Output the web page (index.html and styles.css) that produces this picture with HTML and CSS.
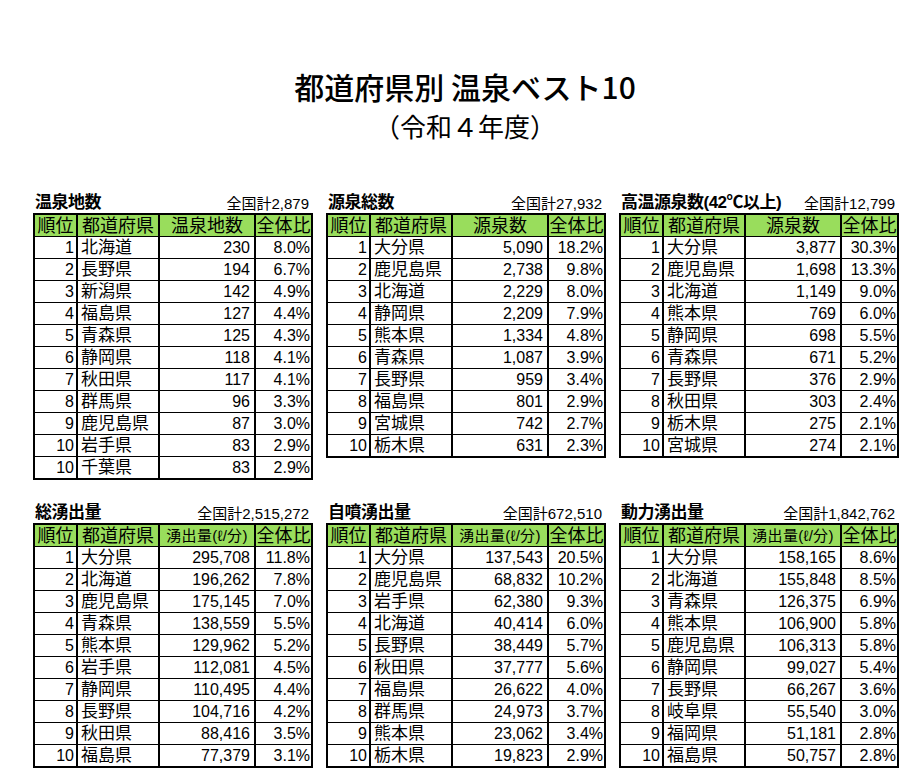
FILE: index.html
```html
<!DOCTYPE html>
<html lang="ja">
<head>
<meta charset="utf-8">
<title>都道府県別 温泉ベスト10</title>
<link rel="stylesheet" href="styles.css">
</head>
<body>
<div class="page">
  <h1 class="title">都道府県別 温泉ベスト10</h1>
  <p class="subtitle">（令和４年度）</p>

  <div class="grid top">
    <section class="block">
      <div class="head"><span class="name">温泉地数</span><span class="total">全国計2,879</span></div>
      <table>
        <tr class="hdr"><th>順位</th><th>都道府県</th><th>温泉地数</th><th>全体比</th></tr>
        <tr><td class="r">1</td><td class="p">北海道</td><td class="v">230</td><td class="c">8.0%</td></tr>
        <tr><td class="r">2</td><td class="p">長野県</td><td class="v">194</td><td class="c">6.7%</td></tr>
        <tr><td class="r">3</td><td class="p">新潟県</td><td class="v">142</td><td class="c">4.9%</td></tr>
        <tr><td class="r">4</td><td class="p">福島県</td><td class="v">127</td><td class="c">4.4%</td></tr>
        <tr><td class="r">5</td><td class="p">青森県</td><td class="v">125</td><td class="c">4.3%</td></tr>
        <tr><td class="r">6</td><td class="p">静岡県</td><td class="v">118</td><td class="c">4.1%</td></tr>
        <tr><td class="r">7</td><td class="p">秋田県</td><td class="v">117</td><td class="c">4.1%</td></tr>
        <tr><td class="r">8</td><td class="p">群馬県</td><td class="v">96</td><td class="c">3.3%</td></tr>
        <tr><td class="r">9</td><td class="p">鹿児島県</td><td class="v">87</td><td class="c">3.0%</td></tr>
        <tr><td class="r">10</td><td class="p">岩手県</td><td class="v">83</td><td class="c">2.9%</td></tr>
        <tr><td class="r">10</td><td class="p">千葉県</td><td class="v">83</td><td class="c">2.9%</td></tr>
      </table>
    </section>

    <section class="block">
      <div class="head"><span class="name">源泉総数</span><span class="total">全国計27,932</span></div>
      <table>
        <tr class="hdr"><th>順位</th><th>都道府県</th><th>源泉数</th><th>全体比</th></tr>
        <tr><td class="r">1</td><td class="p">大分県</td><td class="v">5,090</td><td class="c">18.2%</td></tr>
        <tr><td class="r">2</td><td class="p">鹿児島県</td><td class="v">2,738</td><td class="c">9.8%</td></tr>
        <tr><td class="r">3</td><td class="p">北海道</td><td class="v">2,229</td><td class="c">8.0%</td></tr>
        <tr><td class="r">4</td><td class="p">静岡県</td><td class="v">2,209</td><td class="c">7.9%</td></tr>
        <tr><td class="r">5</td><td class="p">熊本県</td><td class="v">1,334</td><td class="c">4.8%</td></tr>
        <tr><td class="r">6</td><td class="p">青森県</td><td class="v">1,087</td><td class="c">3.9%</td></tr>
        <tr><td class="r">7</td><td class="p">長野県</td><td class="v">959</td><td class="c">3.4%</td></tr>
        <tr><td class="r">8</td><td class="p">福島県</td><td class="v">801</td><td class="c">2.9%</td></tr>
        <tr><td class="r">9</td><td class="p">宮城県</td><td class="v">742</td><td class="c">2.7%</td></tr>
        <tr><td class="r">10</td><td class="p">栃木県</td><td class="v">631</td><td class="c">2.3%</td></tr>
      </table>
    </section>

    <section class="block">
      <div class="head"><span class="name">高温源泉数(42℃以上)</span><span class="total">全国計12,799</span></div>
      <table>
        <tr class="hdr"><th>順位</th><th>都道府県</th><th>源泉数</th><th>全体比</th></tr>
        <tr><td class="r">1</td><td class="p">大分県</td><td class="v">3,877</td><td class="c">30.3%</td></tr>
        <tr><td class="r">2</td><td class="p">鹿児島県</td><td class="v">1,698</td><td class="c">13.3%</td></tr>
        <tr><td class="r">3</td><td class="p">北海道</td><td class="v">1,149</td><td class="c">9.0%</td></tr>
        <tr><td class="r">4</td><td class="p">熊本県</td><td class="v">769</td><td class="c">6.0%</td></tr>
        <tr><td class="r">5</td><td class="p">静岡県</td><td class="v">698</td><td class="c">5.5%</td></tr>
        <tr><td class="r">6</td><td class="p">青森県</td><td class="v">671</td><td class="c">5.2%</td></tr>
        <tr><td class="r">7</td><td class="p">長野県</td><td class="v">376</td><td class="c">2.9%</td></tr>
        <tr><td class="r">8</td><td class="p">秋田県</td><td class="v">303</td><td class="c">2.4%</td></tr>
        <tr><td class="r">9</td><td class="p">栃木県</td><td class="v">275</td><td class="c">2.1%</td></tr>
        <tr><td class="r">10</td><td class="p">宮城県</td><td class="v">274</td><td class="c">2.1%</td></tr>
      </table>
    </section>
  </div>

  <div class="grid bottom">
    <section class="block">
      <div class="head"><span class="name">総湧出量</span><span class="total">全国計2,515,272</span></div>
      <table>
        <tr class="hdr"><th>順位</th><th>都道府県</th><th class="small">湧出量(ℓ/分)</th><th>全体比</th></tr>
        <tr><td class="r">1</td><td class="p">大分県</td><td class="v">295,708</td><td class="c">11.8%</td></tr>
        <tr><td class="r">2</td><td class="p">北海道</td><td class="v">196,262</td><td class="c">7.8%</td></tr>
        <tr><td class="r">3</td><td class="p">鹿児島県</td><td class="v">175,145</td><td class="c">7.0%</td></tr>
        <tr><td class="r">4</td><td class="p">青森県</td><td class="v">138,559</td><td class="c">5.5%</td></tr>
        <tr><td class="r">5</td><td class="p">熊本県</td><td class="v">129,962</td><td class="c">5.2%</td></tr>
        <tr><td class="r">6</td><td class="p">岩手県</td><td class="v">112,081</td><td class="c">4.5%</td></tr>
        <tr><td class="r">7</td><td class="p">静岡県</td><td class="v">110,495</td><td class="c">4.4%</td></tr>
        <tr><td class="r">8</td><td class="p">長野県</td><td class="v">104,716</td><td class="c">4.2%</td></tr>
        <tr><td class="r">9</td><td class="p">秋田県</td><td class="v">88,416</td><td class="c">3.5%</td></tr>
        <tr><td class="r">10</td><td class="p">福島県</td><td class="v">77,379</td><td class="c">3.1%</td></tr>
      </table>
    </section>

    <section class="block">
      <div class="head"><span class="name">自噴湧出量</span><span class="total">全国計672,510</span></div>
      <table>
        <tr class="hdr"><th>順位</th><th>都道府県</th><th class="small">湧出量(ℓ/分)</th><th>全体比</th></tr>
        <tr><td class="r">1</td><td class="p">大分県</td><td class="v">137,543</td><td class="c">20.5%</td></tr>
        <tr><td class="r">2</td><td class="p">鹿児島県</td><td class="v">68,832</td><td class="c">10.2%</td></tr>
        <tr><td class="r">3</td><td class="p">岩手県</td><td class="v">62,380</td><td class="c">9.3%</td></tr>
        <tr><td class="r">4</td><td class="p">北海道</td><td class="v">40,414</td><td class="c">6.0%</td></tr>
        <tr><td class="r">5</td><td class="p">長野県</td><td class="v">38,449</td><td class="c">5.7%</td></tr>
        <tr><td class="r">6</td><td class="p">秋田県</td><td class="v">37,777</td><td class="c">5.6%</td></tr>
        <tr><td class="r">7</td><td class="p">福島県</td><td class="v">26,622</td><td class="c">4.0%</td></tr>
        <tr><td class="r">8</td><td class="p">群馬県</td><td class="v">24,973</td><td class="c">3.7%</td></tr>
        <tr><td class="r">9</td><td class="p">熊本県</td><td class="v">23,062</td><td class="c">3.4%</td></tr>
        <tr><td class="r">10</td><td class="p">栃木県</td><td class="v">19,823</td><td class="c">2.9%</td></tr>
      </table>
    </section>

    <section class="block">
      <div class="head"><span class="name">動力湧出量</span><span class="total">全国計1,842,762</span></div>
      <table>
        <tr class="hdr"><th>順位</th><th>都道府県</th><th class="small">湧出量(ℓ/分)</th><th>全体比</th></tr>
        <tr><td class="r">1</td><td class="p">大分県</td><td class="v">158,165</td><td class="c">8.6%</td></tr>
        <tr><td class="r">2</td><td class="p">北海道</td><td class="v">155,848</td><td class="c">8.5%</td></tr>
        <tr><td class="r">3</td><td class="p">青森県</td><td class="v">126,375</td><td class="c">6.9%</td></tr>
        <tr><td class="r">4</td><td class="p">熊本県</td><td class="v">106,900</td><td class="c">5.8%</td></tr>
        <tr><td class="r">5</td><td class="p">鹿児島県</td><td class="v">106,313</td><td class="c">5.8%</td></tr>
        <tr><td class="r">6</td><td class="p">静岡県</td><td class="v">99,027</td><td class="c">5.4%</td></tr>
        <tr><td class="r">7</td><td class="p">長野県</td><td class="v">66,267</td><td class="c">3.6%</td></tr>
        <tr><td class="r">8</td><td class="p">岐阜県</td><td class="v">55,540</td><td class="c">3.0%</td></tr>
        <tr><td class="r">9</td><td class="p">福岡県</td><td class="v">51,181</td><td class="c">2.8%</td></tr>
        <tr><td class="r">10</td><td class="p">福島県</td><td class="v">50,757</td><td class="c">2.8%</td></tr>
      </table>
    </section>
  </div>
</div>
</body>
</html>
```

FILE: styles.css
```css
html, body {
  margin: 0;
  padding: 0;
  background: #ffffff;
}

body {
  font-family: "Liberation Sans", "Noto Sans CJK JP", sans-serif;
  color: #000000;
}

.page {
  width: 864px;
  padding: 68px 0 0 33px;
}

.title {
  margin: 0;
  text-align: center;
  font-family: "Noto Sans CJK JP", sans-serif;
  font-weight: 500;
  font-size: 30px;
  line-height: 36px;
}

.subtitle {
  margin: 5px 0 0;
  text-align: center;
  font-family: "Noto Sans CJK JP", sans-serif;
  font-weight: 400;
  font-size: 26px;
  line-height: 34px;
}

.grid {
  display: flex;
  align-items: flex-start;
  gap: 15px;
}

.grid.top {
  margin-top: 50px;
}

.grid.bottom {
  margin-top: 23px;
}

.block {
  width: 278px;
}

.head {
  display: flex;
  justify-content: space-between;
  align-items: flex-end;
  height: 20px;
  padding: 0 2px;
}

.name {
  font-weight: 700;
  font-size: 17px;
  line-height: 20px;
  letter-spacing: -0.5px;
}

.total {
  font-size: 15px;
  line-height: 18px;
}

table {
  border-collapse: collapse;
  table-layout: fixed;
  width: 278px;
  border: 2px solid #000000;
}

th, td {
  border-left: 2px solid #000000;
  border-right: 2px solid #000000;
  border-top: 1px solid #000000;
  border-bottom: 1px solid #000000;
  height: 21px;
  padding: 0;
  white-space: nowrap;
  line-height: 20px;
}

th:nth-child(1), td:nth-child(1) { width: 41px; }
th:nth-child(2), td:nth-child(2) { width: 80px; }
th:nth-child(3), td:nth-child(3) { width: 94px; }
th:nth-child(4), td:nth-child(4) { width: 55px; }

.hdr th {
  background: #99dd5c;
  font-weight: 400;
  font-size: 18px;
  text-align: center;
}

.hdr th.small {
  font-size: 15px;
  letter-spacing: 0.3px;
}

td {
  font-size: 16px;
}

td.r {
  text-align: right;
  padding-right: 2px;
}

td.p {
  text-align: left;
  padding-left: 3px;
  font-size: 17px;
}

td.v {
  text-align: right;
  padding-right: 4px;
}

td.c {
  text-align: right;
  padding-right: 1px;
}
```
